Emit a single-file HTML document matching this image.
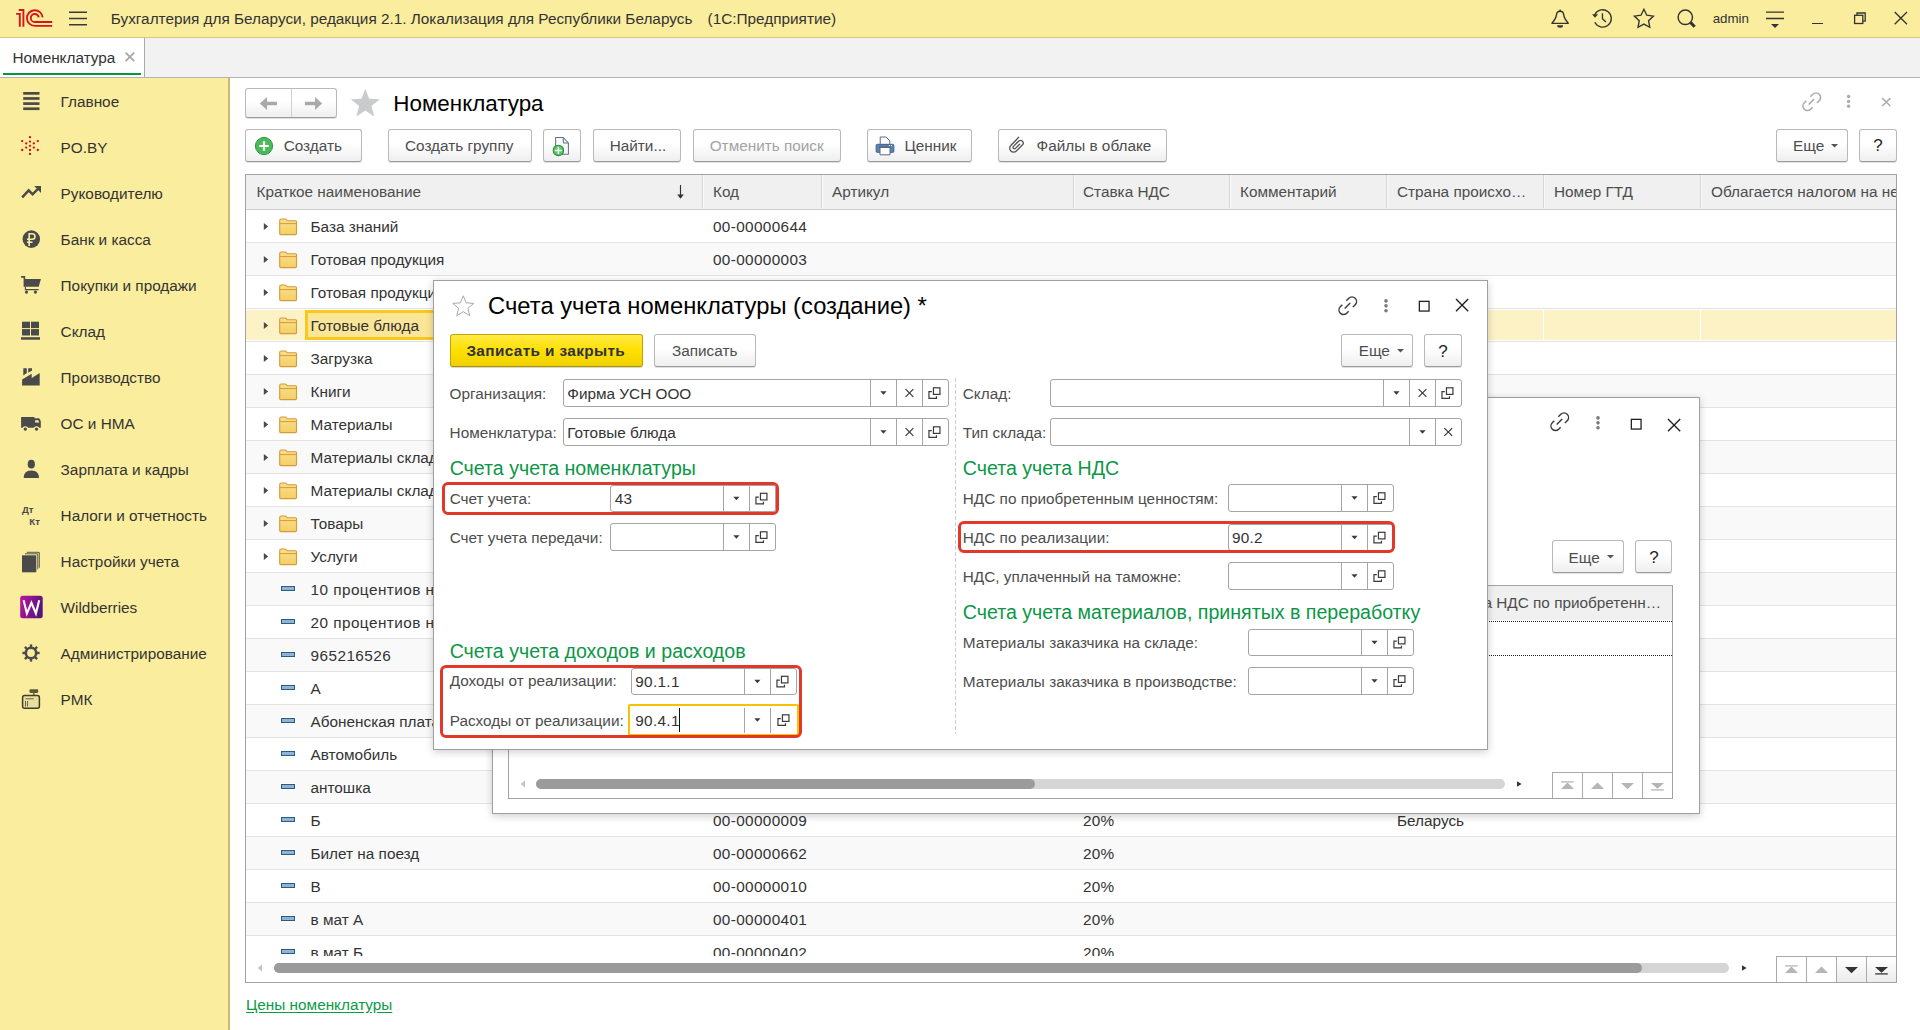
<!DOCTYPE html><html><head><meta charset="utf-8"><style>html,body{margin:0;padding:0;width:1920px;height:1030px;overflow:hidden;background:#fff}body{position:relative;font-family:"Liberation Sans", sans-serif}.t{position:absolute;white-space:nowrap;font-family:"Liberation Sans",sans-serif}svg{display:block}</style></head><body><div style="position:absolute;left:0px;top:0px;width:1920px;height:37px;background:#fbed9e"></div>
<div style="position:absolute;left:0px;top:37px;width:1920px;height:1px;background:#d8c77f"></div>
<svg style="position:absolute;left:0px;top:0px;" width="60" height="37" viewBox="0 0 60 37"><g fill="none" stroke="#d9141a" stroke-width="1.9"><path d="M16.1,13.9 H19.8 V26.8 M18.75,10 H23.4 V26.8"/><path d="M42.6,17.4 A7.85,7.85 0 1 0 34.8,25.9 H52.2"/><path d="M38.75,17.4 A4,4 0 1 0 34.8,22 H52.2"/></g></svg>
<svg style="position:absolute;left:60px;top:0px;" width="40" height="37" viewBox="0 0 40 37"><g stroke="#3a3a3a" stroke-width="1.6"><path d="M9,12.3 H27 M9,18.5 H27 M9,24.7 H27"/></g></svg>
<div class="t" style="left:110.80px;top:11.02px;font-size:15.33px;line-height:15.33px;color:#333;font-weight:normal;">Бухгалтерия для Беларуси, редакция 2.1. Локализация для Республики Беларусь</div>
<div class="t" style="left:707.60px;top:11.02px;font-size:15.33px;line-height:15.33px;color:#333;font-weight:normal;">(1С:Предприятие)</div>
<svg style="position:absolute;left:1540px;top:0px;" width="40" height="37" viewBox="0 0 40 37"><g fill="none" stroke="#333" stroke-width="1.35" stroke-linejoin="round"><path d="M20.1,11.2 C17.6,11.2 16.7,12.6 16.5,14.6 C16.3,17.6 15.4,19.2 11.9,23.3 L28.3,23.3 C24.8,19.2 23.9,17.6 23.7,14.6 C23.5,12.6 22.6,11.2 20.1,11.2 Z"/></g><circle cx="20.1" cy="10.4" r="0.9" fill="#333"/><path d="M17.1,25.3 A3,2.5 0 0 0 23.1,25.3 Z" fill="#333"/></svg>
<svg style="position:absolute;left:1580px;top:0px;" width="40" height="37" viewBox="0 0 40 37"><g fill="none" stroke="#333" stroke-width="1.35"><path d="M14.85,14.50 A8.7,8.7 0 1 1 14.78,22.26"/><path d="M22.45,13.2 V18.8 L25.9,22"/></g><path d="M12,14.3 L18.1,14.3 L15,17.7 Z" fill="#333"/></svg>
<svg style="position:absolute;left:1620px;top:0px;" width="40" height="37" viewBox="0 0 40 37"><path d="M23.90,9.20 L26.78,15.24 L33.41,16.11 L28.56,20.71 L29.78,27.29 L23.90,24.10 L18.02,27.29 L19.24,20.71 L14.39,16.11 L21.02,15.24 Z" fill="none" stroke="#333" stroke-width="1.35" stroke-linejoin="miter"/></svg>
<svg style="position:absolute;left:1660px;top:0px;" width="40" height="37" viewBox="0 0 40 37"><circle cx="25.3" cy="17.3" r="7.2" fill="none" stroke="#333" stroke-width="1.45"/><path d="M30.4,22.4 L34.7,26.7" stroke="#333" stroke-width="3" stroke-linecap="butt"/></svg>
<div class="t" style="left:1712.70px;top:11.52px;font-size:13.33px;line-height:13.33px;color:#333;font-weight:normal;">admin</div>
<svg style="position:absolute;left:1760px;top:0px;" width="30" height="37" viewBox="0 0 30 37"><g stroke="#333" stroke-width="1.3"><path d="M6,12.2 H24 M6,18.5 H24"/></g><path d="M11,24 L19,24 L15,28 Z" fill="#333"/></svg>
<div style="position:absolute;left:1812px;top:22.5px;width:11px;height:1.5px;background:#333"></div>
<svg style="position:absolute;left:1850px;top:0px;" width="24" height="37" viewBox="0 0 24 37"><g fill="none" stroke="#333" stroke-width="1.3"><rect x="4.6" y="15.3" width="8.2" height="8.2"/><path d="M7,15.3 V13 H15.2 V21.2 H12.8"/></g></svg>
<svg style="position:absolute;left:1890px;top:0px;" width="24" height="37" viewBox="0 0 24 37"><g stroke="#333" stroke-width="1.35"><path d="M4.7,12 L17,24.2 M17,12 L4.7,24.2"/></g></svg>
<div style="position:absolute;left:0px;top:38px;width:1920px;height:39px;background:#f2f2f2"></div>
<div style="position:absolute;left:0px;top:77px;width:1920px;height:1px;background:#b3b3b3"></div>
<div style="position:absolute;left:0px;top:38px;width:144px;height:39px;background:#fff"></div>
<div style="position:absolute;left:144px;top:38px;width:1px;height:39px;background:#a9a9a9"></div>
<div style="position:absolute;left:3px;top:73px;width:138px;height:2px;background:#08953f"></div>
<div class="t" style="left:12.50px;top:49.82px;font-size:15.33px;line-height:15.33px;color:#333;font-weight:normal;">Номенклатура</div>
<svg style="position:absolute;left:120px;top:45px;" width="20" height="25" viewBox="0 0 20 25"><g stroke="#a6a6a6" stroke-width="1.7"><path d="M5.6,7.6 L14.2,16.2 M14.2,7.6 L5.6,16.2"/></g></svg>
<div style="position:absolute;left:0px;top:78px;width:229px;height:952px;background:#fbed9e"></div>
<div style="position:absolute;left:228px;top:78px;width:2px;height:952px;background:#c8b976"></div>
<div class="t" style="left:60.60px;top:94.02px;font-size:15.33px;line-height:15.33px;color:#333;font-weight:normal;">Главное</div>
<div class="t" style="left:60.60px;top:140.02px;font-size:15.33px;line-height:15.33px;color:#333;font-weight:normal;">PO.BY</div>
<div class="t" style="left:60.60px;top:186.02px;font-size:15.33px;line-height:15.33px;color:#333;font-weight:normal;">Руководителю</div>
<div class="t" style="left:60.60px;top:232.02px;font-size:15.33px;line-height:15.33px;color:#333;font-weight:normal;">Банк и касса</div>
<div class="t" style="left:60.60px;top:278.02px;font-size:15.33px;line-height:15.33px;color:#333;font-weight:normal;">Покупки и продажи</div>
<div class="t" style="left:60.60px;top:324.02px;font-size:15.33px;line-height:15.33px;color:#333;font-weight:normal;">Склад</div>
<div class="t" style="left:60.60px;top:370.02px;font-size:15.33px;line-height:15.33px;color:#333;font-weight:normal;">Производство</div>
<div class="t" style="left:60.60px;top:416.02px;font-size:15.33px;line-height:15.33px;color:#333;font-weight:normal;">ОС и НМА</div>
<div class="t" style="left:60.60px;top:462.02px;font-size:15.33px;line-height:15.33px;color:#333;font-weight:normal;">Зарплата и кадры</div>
<div class="t" style="left:60.60px;top:508.02px;font-size:15.33px;line-height:15.33px;color:#333;font-weight:normal;">Налоги и отчетность</div>
<div class="t" style="left:60.60px;top:554.02px;font-size:15.33px;line-height:15.33px;color:#333;font-weight:normal;">Настройки учета</div>
<div class="t" style="left:60.60px;top:600.02px;font-size:15.33px;line-height:15.33px;color:#333;font-weight:normal;">Wildberries</div>
<div class="t" style="left:60.60px;top:646.02px;font-size:15.33px;line-height:15.33px;color:#333;font-weight:normal;">Администрирование</div>
<div class="t" style="left:60.60px;top:692.02px;font-size:15.33px;line-height:15.33px;color:#333;font-weight:normal;">РМК</div>
<svg style="position:absolute;left:20px;top:88px;" width="24" height="26" viewBox="0 0 24 26"><rect x="3.2" y="4.00" width="16.3" height="2.7" fill="#4a4a4a"/><rect x="3.2" y="9.13" width="16.3" height="2.7" fill="#4a4a4a"/><rect x="3.2" y="14.26" width="16.3" height="2.7" fill="#4a4a4a"/><rect x="3.2" y="19.39" width="16.3" height="2.7" fill="#4a4a4a"/></svg>
<svg style="position:absolute;left:0px;top:120px;" width="60" height="50" viewBox="0 0 60 50"><circle cx="30" cy="17.20" r="1.15" fill="#d60d0d"/><circle cx="30" cy="21.60" r="1.15" fill="#d60d0d"/><circle cx="30" cy="25.80" r="1.15" fill="#d60d0d"/><circle cx="30" cy="30.00" r="1.15" fill="#d60d0d"/><circle cx="30" cy="33.90" r="1.15" fill="#d60d0d"/><circle cx="26.2" cy="23.40" r="1.15" fill="#d60d0d"/><circle cx="33.8" cy="23.40" r="1.15" fill="#d60d0d"/><circle cx="26.2" cy="27.60" r="1.15" fill="#d60d0d"/><circle cx="33.8" cy="27.60" r="1.15" fill="#d60d0d"/><circle cx="22.2" cy="21.10" r="1.15" fill="#d60d0d"/><circle cx="37.8" cy="21.10" r="1.15" fill="#d60d0d"/><circle cx="22.2" cy="30.00" r="1.15" fill="#d60d0d"/><circle cx="37.8" cy="30.00" r="1.15" fill="#d60d0d"/></svg>
<svg style="position:absolute;left:0px;top:170px;" width="60" height="40" viewBox="0 0 60 40"><path d="M22.2,27.4 L28.7,20.3 L32.6,24.3 L38.2,18.6" fill="none" stroke="#4a4a4a" stroke-width="2.5" stroke-linejoin="miter"/><path d="M34.2,16.1 L41,16.1 L41,23 Z" fill="#4a4a4a"/></svg>
<svg style="position:absolute;left:0px;top:220px;" width="60" height="40" viewBox="0 0 60 40"><circle cx="31.3" cy="19.1" r="8.8" fill="#4a4a4a"/><g fill="none" stroke="#fbed9e" stroke-width="1.6"><path d="M29.2,26 V13.7 H32.2 A2.8,2.8 0 0 1 32.2,19.3 H27"/><path d="M27,22.2 H32.5"/></g></svg>
<svg style="position:absolute;left:0px;top:265px;" width="60" height="40" viewBox="0 0 60 40"><path d="M21.1,11.9 H24.4 V21.7" fill="none" stroke="#4a4a4a" stroke-width="1.6"/><path d="M24.4,14.1 H40.9 L38.7,21.8 H24.4 Z" fill="#4a4a4a"/><path d="M25.4,21.7 V24.6 H38.7" fill="none" stroke="#4a4a4a" stroke-width="1.1"/><circle cx="26.5" cy="27.1" r="1.6" fill="#4a4a4a"/><circle cx="35.4" cy="27.1" r="1.6" fill="#4a4a4a"/></svg>
<svg style="position:absolute;left:0px;top:315px;" width="60" height="30" viewBox="0 0 60 30"><g fill="#4a4a4a"><rect x="22" y="6.7" width="8" height="6.4"/><rect x="31" y="6.7" width="8" height="6.4"/><rect x="22" y="14.1" width="8" height="6.4"/><rect x="31" y="14.1" width="8" height="6.4"/><rect x="21" y="22.2" width="19" height="2.5"/></g></svg>
<svg style="position:absolute;left:0px;top:360px;" width="60" height="30" viewBox="0 0 60 30"><path d="M22.1,19.4 L31.7,13.7 V18.1 L39.7,13.1 V25.6 H22.1 Z M23.3,8.2 H26.8 V13.1 L23.3,15.4 Z M28.2,8.2 H32 V10.5 L28.2,12.8 Z" fill="#4a4a4a"/></svg>
<svg style="position:absolute;left:0px;top:410px;" width="60" height="30" viewBox="0 0 60 30"><path d="M21.1,7.0 H34.4 V8.3 H38.3 Q39.5,8.3 40.1,9.6 L40.8,11.4 V17.8 H21.1 Z" fill="#4a4a4a"/><path d="M35.1,10.2 H38.4 L39.3,12.6 H35.1 Z" fill="#fbed9e"/><circle cx="25.3" cy="19.1" r="2.9" fill="#fbed9e"/><circle cx="36.5" cy="19.1" r="2.9" fill="#fbed9e"/><circle cx="25.3" cy="19.1" r="1.7" fill="#4a4a4a"/><circle cx="36.5" cy="19.1" r="1.7" fill="#4a4a4a"/></svg>
<svg style="position:absolute;left:0px;top:455px;" width="60" height="30" viewBox="0 0 60 30"><ellipse cx="31.3" cy="9.2" rx="3.6" ry="4.4" fill="#4a4a4a"/><path d="M23.7,23 C23.7,18.5 26,15.5 31.3,15.5 C36.6,15.5 39,18.5 39,23 Z" fill="#4a4a4a"/></svg>
<div class="t" style="left:22px;top:505.2px;font-size:9.6px;line-height:9.6px;font-weight:bold;color:#4a4a4a">Дт</div>
<div class="t" style="left:29.3px;top:516.8px;font-size:9.6px;line-height:9.6px;font-weight:bold;color:#4a4a4a">Кт</div>
<svg style="position:absolute;left:0px;top:546.5px;" width="60" height="30" viewBox="0 0 60 30"><g fill="none" stroke="#4a4a4a" stroke-width="0.9"><path d="M25,6.8 H37.8 V22.3"/><path d="M26.8,5.3 H39.3 V20.8"/></g><rect x="22" y="8.3" width="14.3" height="17" fill="#4a4a4a"/></svg>
<svg style="position:absolute;left:0px;top:590px;" width="60" height="35" viewBox="0 0 60 35"><defs><linearGradient id="wb" x1="0" y1="0" x2="1" y2="0.3"><stop offset="0" stop-color="#c0139f"/><stop offset="1" stop-color="#55157f"/></linearGradient></defs><rect x="20.2" y="5.8" width="22.5" height="22.5" rx="2.5" fill="url(#wb)"/><path d="M23.6,10.2 L26.9,23.5 L31.4,12.8 L35.9,23.5 L39.2,10.2" fill="none" stroke="#fff" stroke-width="2.1" stroke-linejoin="miter"/></svg>
<svg style="position:absolute;left:0px;top:640px;" width="60" height="30" viewBox="0 0 60 30"><circle cx="31" cy="13" r="5.2" fill="none" stroke="#4a4a4a" stroke-width="2.6"/><path d="M36.60,13.00 L39.60,13.00" stroke="#4a4a4a" stroke-width="2.4"/><path d="M34.96,16.96 L37.08,19.08" stroke="#4a4a4a" stroke-width="2.4"/><path d="M31.00,18.60 L31.00,21.60" stroke="#4a4a4a" stroke-width="2.4"/><path d="M27.04,16.96 L24.92,19.08" stroke="#4a4a4a" stroke-width="2.4"/><path d="M25.40,13.00 L22.40,13.00" stroke="#4a4a4a" stroke-width="2.4"/><path d="M27.04,9.04 L24.92,6.92" stroke="#4a4a4a" stroke-width="2.4"/><path d="M31.00,7.40 L31.00,4.40" stroke="#4a4a4a" stroke-width="2.4"/><path d="M34.96,9.04 L37.08,6.92" stroke="#4a4a4a" stroke-width="2.4"/></svg>
<svg style="position:absolute;left:0px;top:685px;" width="60" height="30" viewBox="0 0 60 30"><rect x="29.5" y="4.3" width="8.7" height="3.6" rx="0.8" fill="#5a5a3a"/><path d="M33.8,8 V10.4" stroke="#5a5a3a" stroke-width="1.3"/><rect x="22.6" y="10.6" width="16.8" height="12.6" rx="2" fill="#e9dea0" stroke="#3f3f2a" stroke-width="1.5"/><path d="M25.5,13.8 H33.8 M25.5,16 V21.5 M27.5,16 V21.5" stroke="#5a5a3a" stroke-width="0.9"/></svg>
<div style="position:absolute;left:230px;top:78px;width:1690px;height:952px;background:#fff"></div>
<div style="position:absolute;left:245px;top:88px;width:92px;height:30px;box-sizing:border-box;border:1px solid #b9b9b9;border-bottom-color:#9c9c9c;border-radius:3px;background:linear-gradient(#ffffff 0%,#ffffff 42%,#efefef 100%);box-shadow:0 1px 0 rgba(0,0,0,0.12);"></div>
<div style="position:absolute;left:291px;top:89px;width:1px;height:28px;background:#d0d0d0"></div>
<svg style="position:absolute;left:255px;top:92px;" width="30" height="22" viewBox="0 0 30 22"><path d="M4.8,11.5 L12.1,5 V9.8 H22 V13.2 H12.1 V18 Z" fill="#a9a9a9"/></svg>
<svg style="position:absolute;left:300px;top:92px;" width="30" height="22" viewBox="0 0 30 22"><path d="M22.1,11.5 L15,5 V9.8 H4.9 V13.2 H15 V18 Z" fill="#a9a9a9"/></svg>
<svg style="position:absolute;left:345px;top:84px;" width="40" height="40" viewBox="0 0 40 40"><path d="M20.30,4.80 L24.12,14.84 L34.85,15.37 L26.48,22.11 L29.29,32.48 L20.30,26.60 L11.31,32.48 L14.12,22.11 L5.75,15.37 L16.48,14.84 Z" fill="#cacbcd"/></svg>
<div class="t" style="left:393.30px;top:92.84px;font-size:22.4px;line-height:22.4px;color:#000;font-weight:normal;">Номенклатура</div>
<svg style="position:absolute;left:1802px;top:92px;" width="20" height="20" viewBox="0 0 20 20"><path d="M4.3,8.8 L2.3,10.8 A4.5,4.5 0 0 0 8.7,17.2 L10.6,15.3 M8.3,4.8 L10.8,2.3 A4.5,4.5 0 0 1 17.2,8.7 L14.9,11 M6.7,12.5 L12.2,7" fill="none" stroke="#ababab" stroke-width="1.6"/></svg>
<svg style="position:absolute;left:1840px;top:90px;" width="20" height="22" viewBox="0 0 20 22"><g fill="#ababab"><circle cx="8.6" cy="6.5" r="1.7"/><circle cx="8.6" cy="11.4" r="1.7"/><circle cx="8.6" cy="16.3" r="1.7"/></g></svg>
<svg style="position:absolute;left:1876px;top:92px;" width="20" height="20" viewBox="0 0 20 20"><path d="M6.2,6.1 L14.4,14 M14.4,6.1 L6.2,14" stroke="#adadad" stroke-width="1.5"/></svg>
<div style="position:absolute;left:245px;top:129px;width:116.5px;height:32.5px;box-sizing:border-box;border:1px solid #b9b9b9;border-bottom-color:#9c9c9c;border-radius:3px;background:linear-gradient(#ffffff 0%,#ffffff 42%,#efefef 100%);box-shadow:0 1px 0 rgba(0,0,0,0.12);"></div>
<div class="t" style="left:283.70px;top:138.02px;font-size:15.33px;line-height:15.33px;color:#4d4d4d;font-weight:normal;">Создать</div>
<svg style="position:absolute;left:253px;top:135px;" width="22" height="22" viewBox="0 0 22 22"><circle cx="11" cy="11" r="8.6" fill="#4cb85c" stroke="#2a9a3a" stroke-width="1"/><path d="M11,6.3 V15.7 M6.3,11 H15.7" stroke="#fff" stroke-width="2.2"/></svg>
<div style="position:absolute;left:387.5px;top:129px;width:144.0px;height:32.5px;box-sizing:border-box;border:1px solid #b9b9b9;border-bottom-color:#9c9c9c;border-radius:3px;background:linear-gradient(#ffffff 0%,#ffffff 42%,#efefef 100%);box-shadow:0 1px 0 rgba(0,0,0,0.12);"></div>
<div class="t" style="left:405.00px;top:138.02px;font-size:15.33px;line-height:15.33px;color:#4d4d4d;font-weight:normal;">Создать группу</div>
<div style="position:absolute;left:543.3px;top:129px;width:37.5px;height:32.5px;box-sizing:border-box;border:1px solid #b9b9b9;border-bottom-color:#9c9c9c;border-radius:3px;background:linear-gradient(#ffffff 0%,#ffffff 42%,#efefef 100%);box-shadow:0 1px 0 rgba(0,0,0,0.12);"></div>
<svg style="position:absolute;left:550px;top:133px;" width="26" height="26" viewBox="0 0 26 26"><path d="M5.6,4.5 H13.3 L18.4,10 V21.2 H5.6 Z" fill="#fafafa" stroke="#5f7186" stroke-width="1.05" stroke-linejoin="round"/><path d="M13.3,4.5 V9 Q13.3,10 14.3,10 H18.4" fill="none" stroke="#5f7186" stroke-width="1.05"/><circle cx="8.4" cy="17.4" r="5.2" fill="#5cc46c" stroke="#1f9a2f" stroke-width="1.1"/><path d="M8.4,13.9 V20.9 M4.9,17.4 H11.9" stroke="#fff" stroke-width="1.5"/></svg>
<div style="position:absolute;left:592.5px;top:129px;width:88.0px;height:32.5px;box-sizing:border-box;border:1px solid #b9b9b9;border-bottom-color:#9c9c9c;border-radius:3px;background:linear-gradient(#ffffff 0%,#ffffff 42%,#efefef 100%);box-shadow:0 1px 0 rgba(0,0,0,0.12);"></div>
<div class="t" style="left:609.70px;top:138.02px;font-size:15.33px;line-height:15.33px;color:#4d4d4d;font-weight:normal;">Найти...</div>
<div style="position:absolute;left:692.5px;top:129px;width:148.0px;height:32.5px;box-sizing:border-box;border:1px solid #b9b9b9;border-bottom-color:#9c9c9c;border-radius:3px;background:linear-gradient(#ffffff 0%,#ffffff 42%,#efefef 100%);box-shadow:0 1px 0 rgba(0,0,0,0.12);"></div>
<div class="t" style="left:709.70px;top:138.02px;font-size:15.33px;line-height:15.33px;color:#a3a3a3;font-weight:normal;">Отменить поиск</div>
<div style="position:absolute;left:866.7px;top:129px;width:105.79999999999995px;height:32.5px;box-sizing:border-box;border:1px solid #b9b9b9;border-bottom-color:#9c9c9c;border-radius:3px;background:linear-gradient(#ffffff 0%,#ffffff 42%,#efefef 100%);box-shadow:0 1px 0 rgba(0,0,0,0.12);"></div>
<div class="t" style="left:904.50px;top:138.02px;font-size:15.33px;line-height:15.33px;color:#4d4d4d;font-weight:normal;">Ценник</div>
<svg style="position:absolute;left:872px;top:133px;" width="26" height="26" viewBox="0 0 26 26"><path d="M8.2,4 H14.3 L17.8,8 V11.8 H8.2 Z" fill="#fff" stroke="#5b6b80" stroke-width="1"/><rect x="4.1" y="11.3" width="17.8" height="8.1" rx="1.2" fill="#5b82ad" stroke="#3f6088" stroke-width="0.9"/><path d="M7,14.2 H19" stroke="#3a5677" stroke-width="1"/><path d="M8,14.5 H18 V21.8 H8 Z" fill="#fff" stroke="#5b6b80" stroke-width="1"/><circle cx="17.4" cy="12.6" r="0.6" fill="#fff"/><circle cx="19.5" cy="12.6" r="0.6" fill="#fff"/></svg>
<div style="position:absolute;left:998.4px;top:129px;width:169.0000000000001px;height:32.5px;box-sizing:border-box;border:1px solid #b9b9b9;border-bottom-color:#9c9c9c;border-radius:3px;background:linear-gradient(#ffffff 0%,#ffffff 42%,#efefef 100%);box-shadow:0 1px 0 rgba(0,0,0,0.12);"></div>
<div class="t" style="left:1036.50px;top:138.02px;font-size:15.33px;line-height:15.33px;color:#4d4d4d;font-weight:normal;">Файлы в облаке</div>
<svg style="position:absolute;left:1004px;top:133px;" width="26" height="24" viewBox="0 0 26 24"><path d="M14.7,4.3 L6.84,12.54 A3.9,3.9 0 0 0 12.36,18.06 L18.41,12.01 A2.7,2.7 0 0 0 14.59,8.19 L9.4,13.4 A1.41,1.41 0 0 0 11.4,15.4 L15.6,11.2" fill="none" stroke="#555" stroke-width="1.3" stroke-linecap="round"/></svg>
<div style="position:absolute;left:1776.4px;top:129px;width:71.19999999999982px;height:32.5px;box-sizing:border-box;border:1px solid #b9b9b9;border-bottom-color:#9c9c9c;border-radius:3px;background:linear-gradient(#ffffff 0%,#ffffff 42%,#efefef 100%);box-shadow:0 1px 0 rgba(0,0,0,0.12);"></div>
<div class="t" style="left:1793.00px;top:138.02px;font-size:15.33px;line-height:15.33px;color:#4d4d4d;font-weight:normal;">Еще</div>
<svg style="position:absolute;left:1829px;top:141px;" width="12" height="10" viewBox="0 0 12 10"><path d="M2,3 H9 L5.5,6.6 Z" fill="#555"/></svg>
<div style="position:absolute;left:1859.4px;top:129px;width:37.399999999999864px;height:32.5px;box-sizing:border-box;border:1px solid #b9b9b9;border-bottom-color:#9c9c9c;border-radius:3px;background:linear-gradient(#ffffff 0%,#ffffff 42%,#efefef 100%);box-shadow:0 1px 0 rgba(0,0,0,0.12);"></div>
<div class="t" style="left:1873.20px;top:137.11px;font-size:17px;line-height:17px;color:#222;font-weight:normal;">?</div>
<div style="position:absolute;left:245px;top:174px;width:1652px;height:809px;box-sizing:border-box;border:1px solid #a3a3a3;background:#fff"></div>
<div style="position:absolute;left:246px;top:175px;width:1650px;height:34px;background:#f0f0f0"></div>
<div style="position:absolute;left:246px;top:209px;width:1650px;height:1px;background:#cdcdcd"></div>
<div style="position:absolute;left:702px;top:175px;width:1px;height:33px;background:#d6d6d6"></div>
<div style="position:absolute;left:703px;top:175px;width:1px;height:33px;background:#fafafa"></div>
<div style="position:absolute;left:821px;top:175px;width:1px;height:33px;background:#d6d6d6"></div>
<div style="position:absolute;left:822px;top:175px;width:1px;height:33px;background:#fafafa"></div>
<div style="position:absolute;left:1073px;top:175px;width:1px;height:33px;background:#d6d6d6"></div>
<div style="position:absolute;left:1074px;top:175px;width:1px;height:33px;background:#fafafa"></div>
<div style="position:absolute;left:1229px;top:175px;width:1px;height:33px;background:#d6d6d6"></div>
<div style="position:absolute;left:1230px;top:175px;width:1px;height:33px;background:#fafafa"></div>
<div style="position:absolute;left:1386px;top:175px;width:1px;height:33px;background:#d6d6d6"></div>
<div style="position:absolute;left:1387px;top:175px;width:1px;height:33px;background:#fafafa"></div>
<div style="position:absolute;left:1543px;top:175px;width:1px;height:33px;background:#d6d6d6"></div>
<div style="position:absolute;left:1544px;top:175px;width:1px;height:33px;background:#fafafa"></div>
<div style="position:absolute;left:1700px;top:175px;width:1px;height:33px;background:#d6d6d6"></div>
<div style="position:absolute;left:1701px;top:175px;width:1px;height:33px;background:#fafafa"></div>
<div style="position:absolute;left:246px;top:175px;width:1650px;height:33px;overflow:hidden">
<div class="t" style="left:10.50px;top:9.02px;font-size:15.33px;line-height:15.33px;color:#4d4d4d;font-weight:normal;">Краткое наименование</div>
<div class="t" style="left:467.00px;top:9.02px;font-size:15.33px;line-height:15.33px;color:#4d4d4d;font-weight:normal;">Код</div>
<div class="t" style="left:586.00px;top:9.02px;font-size:15.33px;line-height:15.33px;color:#4d4d4d;font-weight:normal;">Артикул</div>
<div class="t" style="left:837.00px;top:9.02px;font-size:15.33px;line-height:15.33px;color:#4d4d4d;font-weight:normal;">Ставка НДС</div>
<div class="t" style="left:994.00px;top:9.02px;font-size:15.33px;line-height:15.33px;color:#4d4d4d;font-weight:normal;">Комментарий</div>
<div class="t" style="left:1151.00px;top:9.02px;font-size:15.33px;line-height:15.33px;color:#4d4d4d;font-weight:normal;">Страна происхо…</div>
<div class="t" style="left:1308.00px;top:9.02px;font-size:15.33px;line-height:15.33px;color:#4d4d4d;font-weight:normal;">Номер ГТД</div>
<div class="t" style="left:1465.00px;top:9.02px;font-size:15.33px;line-height:15.33px;color:#4d4d4d;font-weight:normal;">Облагается налогом на недвижимость</div>
</div>
<svg style="position:absolute;left:672px;top:180px;" width="16" height="24" viewBox="0 0 16 24"><path d="M8.5,5 V16" stroke="#333" stroke-width="1.15"/><path d="M5.2,14.6 L8.5,18.8 L11.8,14.6 Z" fill="#333"/></svg>
<div style="position:absolute;left:246px;top:210px;width:1650px;height:746px;overflow:hidden">
<div style="position:absolute;left:0px;top:32px;width:1650px;height:1px;background:#e3e3e3"></div>
<svg style="position:absolute;left:12px;top:4px" width="44" height="24" viewBox="0 0 44 24"><path d="M5.8,8.9 V16 L10.2,12.45 Z" fill="#4a4a4a"/><defs><linearGradient id="fg" x1="0" y1="0" x2="0" y2="1"><stop offset="0" stop-color="#fbe08a"/><stop offset="1" stop-color="#f3cf68"/></linearGradient></defs><path d="M21.7,6.8 Q21.7,5 23.2,5 H27.5 L29.4,6.8 H37.6 Q38.5,6.8 38.5,7.8 V19.6 Q38.5,20.6 37.5,20.6 H22.7 Q21.7,20.6 21.7,19.6 Z" fill="url(#fg)" stroke="#d59a3b" stroke-width="1.1"/><path d="M21.9,9.6 H38.3" stroke="#d59a3b" stroke-width="1"/></svg>
<div class="t" style="left:64.5px;top:9.02px;font-size:15.33px;line-height:15.33px;color:#333;letter-spacing:0">База знаний</div>
<div class="t" style="left:467px;top:9.02px;font-size:15.33px;line-height:15.33px;color:#333;letter-spacing:0.35px">00-00000644</div>
<div style="position:absolute;left:0px;top:33px;width:1650px;height:32px;background:#f9f9f9"></div>
<div style="position:absolute;left:0px;top:65px;width:1650px;height:1px;background:#e3e3e3"></div>
<svg style="position:absolute;left:12px;top:37px" width="44" height="24" viewBox="0 0 44 24"><path d="M5.8,8.9 V16 L10.2,12.45 Z" fill="#4a4a4a"/><defs><linearGradient id="fg" x1="0" y1="0" x2="0" y2="1"><stop offset="0" stop-color="#fbe08a"/><stop offset="1" stop-color="#f3cf68"/></linearGradient></defs><path d="M21.7,6.8 Q21.7,5 23.2,5 H27.5 L29.4,6.8 H37.6 Q38.5,6.8 38.5,7.8 V19.6 Q38.5,20.6 37.5,20.6 H22.7 Q21.7,20.6 21.7,19.6 Z" fill="url(#fg)" stroke="#d59a3b" stroke-width="1.1"/><path d="M21.9,9.6 H38.3" stroke="#d59a3b" stroke-width="1"/></svg>
<div class="t" style="left:64.5px;top:42.02px;font-size:15.33px;line-height:15.33px;color:#333;letter-spacing:0">Готовая продукция</div>
<div class="t" style="left:467px;top:42.02px;font-size:15.33px;line-height:15.33px;color:#333;letter-spacing:0.35px">00-00000003</div>
<div style="position:absolute;left:0px;top:98px;width:1650px;height:1px;background:#e3e3e3"></div>
<svg style="position:absolute;left:12px;top:70px" width="44" height="24" viewBox="0 0 44 24"><path d="M5.8,8.9 V16 L10.2,12.45 Z" fill="#4a4a4a"/><defs><linearGradient id="fg" x1="0" y1="0" x2="0" y2="1"><stop offset="0" stop-color="#fbe08a"/><stop offset="1" stop-color="#f3cf68"/></linearGradient></defs><path d="M21.7,6.8 Q21.7,5 23.2,5 H27.5 L29.4,6.8 H37.6 Q38.5,6.8 38.5,7.8 V19.6 Q38.5,20.6 37.5,20.6 H22.7 Q21.7,20.6 21.7,19.6 Z" fill="url(#fg)" stroke="#d59a3b" stroke-width="1.1"/><path d="M21.9,9.6 H38.3" stroke="#d59a3b" stroke-width="1"/></svg>
<div class="t" style="left:64.5px;top:75.02px;font-size:15.33px;line-height:15.33px;color:#333;letter-spacing:0">Готовая продукция (склад)</div>
<div style="position:absolute;left:0px;top:100px;width:1650px;height:30px;background:#fdf2c6"></div>
<div style="position:absolute;left:456px;top:100px;width:1px;height:30px;background:#fff"></div>
<div style="position:absolute;left:575px;top:100px;width:1px;height:30px;background:#fff"></div>
<div style="position:absolute;left:827px;top:100px;width:1px;height:30px;background:#fff"></div>
<div style="position:absolute;left:983px;top:100px;width:1px;height:30px;background:#fff"></div>
<div style="position:absolute;left:1140px;top:100px;width:1px;height:30px;background:#fff"></div>
<div style="position:absolute;left:1297px;top:100px;width:1px;height:30px;background:#fff"></div>
<div style="position:absolute;left:1454px;top:100px;width:1px;height:30px;background:#fff"></div>
<div style="position:absolute;left:59px;top:100px;width:397px;height:30px;box-sizing:border-box;border:3px solid #f6c91c;background:#fbe597"></div>
<div style="position:absolute;left:0px;top:131px;width:1650px;height:1px;background:#e3e3e3"></div>
<svg style="position:absolute;left:12px;top:103px" width="44" height="24" viewBox="0 0 44 24"><path d="M5.8,8.9 V16 L10.2,12.45 Z" fill="#4a4a4a"/><defs><linearGradient id="fg" x1="0" y1="0" x2="0" y2="1"><stop offset="0" stop-color="#fbe08a"/><stop offset="1" stop-color="#f3cf68"/></linearGradient></defs><path d="M21.7,6.8 Q21.7,5 23.2,5 H27.5 L29.4,6.8 H37.6 Q38.5,6.8 38.5,7.8 V19.6 Q38.5,20.6 37.5,20.6 H22.7 Q21.7,20.6 21.7,19.6 Z" fill="url(#fg)" stroke="#d59a3b" stroke-width="1.1"/><path d="M21.9,9.6 H38.3" stroke="#d59a3b" stroke-width="1"/></svg>
<div class="t" style="left:64.5px;top:108.02px;font-size:15.33px;line-height:15.33px;color:#333;letter-spacing:0">Готовые блюда</div>
<div style="position:absolute;left:0px;top:164px;width:1650px;height:1px;background:#e3e3e3"></div>
<svg style="position:absolute;left:12px;top:136px" width="44" height="24" viewBox="0 0 44 24"><path d="M5.8,8.9 V16 L10.2,12.45 Z" fill="#4a4a4a"/><defs><linearGradient id="fg" x1="0" y1="0" x2="0" y2="1"><stop offset="0" stop-color="#fbe08a"/><stop offset="1" stop-color="#f3cf68"/></linearGradient></defs><path d="M21.7,6.8 Q21.7,5 23.2,5 H27.5 L29.4,6.8 H37.6 Q38.5,6.8 38.5,7.8 V19.6 Q38.5,20.6 37.5,20.6 H22.7 Q21.7,20.6 21.7,19.6 Z" fill="url(#fg)" stroke="#d59a3b" stroke-width="1.1"/><path d="M21.9,9.6 H38.3" stroke="#d59a3b" stroke-width="1"/></svg>
<div class="t" style="left:64.5px;top:141.02px;font-size:15.33px;line-height:15.33px;color:#333;letter-spacing:0">Загрузка</div>
<div style="position:absolute;left:0px;top:165px;width:1650px;height:32px;background:#f9f9f9"></div>
<div style="position:absolute;left:0px;top:197px;width:1650px;height:1px;background:#e3e3e3"></div>
<svg style="position:absolute;left:12px;top:169px" width="44" height="24" viewBox="0 0 44 24"><path d="M5.8,8.9 V16 L10.2,12.45 Z" fill="#4a4a4a"/><defs><linearGradient id="fg" x1="0" y1="0" x2="0" y2="1"><stop offset="0" stop-color="#fbe08a"/><stop offset="1" stop-color="#f3cf68"/></linearGradient></defs><path d="M21.7,6.8 Q21.7,5 23.2,5 H27.5 L29.4,6.8 H37.6 Q38.5,6.8 38.5,7.8 V19.6 Q38.5,20.6 37.5,20.6 H22.7 Q21.7,20.6 21.7,19.6 Z" fill="url(#fg)" stroke="#d59a3b" stroke-width="1.1"/><path d="M21.9,9.6 H38.3" stroke="#d59a3b" stroke-width="1"/></svg>
<div class="t" style="left:64.5px;top:174.02px;font-size:15.33px;line-height:15.33px;color:#333;letter-spacing:0">Книги</div>
<div style="position:absolute;left:0px;top:230px;width:1650px;height:1px;background:#e3e3e3"></div>
<svg style="position:absolute;left:12px;top:202px" width="44" height="24" viewBox="0 0 44 24"><path d="M5.8,8.9 V16 L10.2,12.45 Z" fill="#4a4a4a"/><defs><linearGradient id="fg" x1="0" y1="0" x2="0" y2="1"><stop offset="0" stop-color="#fbe08a"/><stop offset="1" stop-color="#f3cf68"/></linearGradient></defs><path d="M21.7,6.8 Q21.7,5 23.2,5 H27.5 L29.4,6.8 H37.6 Q38.5,6.8 38.5,7.8 V19.6 Q38.5,20.6 37.5,20.6 H22.7 Q21.7,20.6 21.7,19.6 Z" fill="url(#fg)" stroke="#d59a3b" stroke-width="1.1"/><path d="M21.9,9.6 H38.3" stroke="#d59a3b" stroke-width="1"/></svg>
<div class="t" style="left:64.5px;top:207.02px;font-size:15.33px;line-height:15.33px;color:#333;letter-spacing:0">Материалы</div>
<div style="position:absolute;left:0px;top:231px;width:1650px;height:32px;background:#f9f9f9"></div>
<div style="position:absolute;left:0px;top:263px;width:1650px;height:1px;background:#e3e3e3"></div>
<svg style="position:absolute;left:12px;top:235px" width="44" height="24" viewBox="0 0 44 24"><path d="M5.8,8.9 V16 L10.2,12.45 Z" fill="#4a4a4a"/><defs><linearGradient id="fg" x1="0" y1="0" x2="0" y2="1"><stop offset="0" stop-color="#fbe08a"/><stop offset="1" stop-color="#f3cf68"/></linearGradient></defs><path d="M21.7,6.8 Q21.7,5 23.2,5 H27.5 L29.4,6.8 H37.6 Q38.5,6.8 38.5,7.8 V19.6 Q38.5,20.6 37.5,20.6 H22.7 Q21.7,20.6 21.7,19.6 Z" fill="url(#fg)" stroke="#d59a3b" stroke-width="1.1"/><path d="M21.9,9.6 H38.3" stroke="#d59a3b" stroke-width="1"/></svg>
<div class="t" style="left:64.5px;top:240.02px;font-size:15.33px;line-height:15.33px;color:#333;letter-spacing:0">Материалы склад 1</div>
<div style="position:absolute;left:0px;top:296px;width:1650px;height:1px;background:#e3e3e3"></div>
<svg style="position:absolute;left:12px;top:268px" width="44" height="24" viewBox="0 0 44 24"><path d="M5.8,8.9 V16 L10.2,12.45 Z" fill="#4a4a4a"/><defs><linearGradient id="fg" x1="0" y1="0" x2="0" y2="1"><stop offset="0" stop-color="#fbe08a"/><stop offset="1" stop-color="#f3cf68"/></linearGradient></defs><path d="M21.7,6.8 Q21.7,5 23.2,5 H27.5 L29.4,6.8 H37.6 Q38.5,6.8 38.5,7.8 V19.6 Q38.5,20.6 37.5,20.6 H22.7 Q21.7,20.6 21.7,19.6 Z" fill="url(#fg)" stroke="#d59a3b" stroke-width="1.1"/><path d="M21.9,9.6 H38.3" stroke="#d59a3b" stroke-width="1"/></svg>
<div class="t" style="left:64.5px;top:273.02px;font-size:15.33px;line-height:15.33px;color:#333;letter-spacing:0">Материалы склад 2</div>
<div style="position:absolute;left:0px;top:297px;width:1650px;height:32px;background:#f9f9f9"></div>
<div style="position:absolute;left:0px;top:329px;width:1650px;height:1px;background:#e3e3e3"></div>
<svg style="position:absolute;left:12px;top:301px" width="44" height="24" viewBox="0 0 44 24"><path d="M5.8,8.9 V16 L10.2,12.45 Z" fill="#4a4a4a"/><defs><linearGradient id="fg" x1="0" y1="0" x2="0" y2="1"><stop offset="0" stop-color="#fbe08a"/><stop offset="1" stop-color="#f3cf68"/></linearGradient></defs><path d="M21.7,6.8 Q21.7,5 23.2,5 H27.5 L29.4,6.8 H37.6 Q38.5,6.8 38.5,7.8 V19.6 Q38.5,20.6 37.5,20.6 H22.7 Q21.7,20.6 21.7,19.6 Z" fill="url(#fg)" stroke="#d59a3b" stroke-width="1.1"/><path d="M21.9,9.6 H38.3" stroke="#d59a3b" stroke-width="1"/></svg>
<div class="t" style="left:64.5px;top:306.02px;font-size:15.33px;line-height:15.33px;color:#333;letter-spacing:0">Товары</div>
<div style="position:absolute;left:0px;top:362px;width:1650px;height:1px;background:#e3e3e3"></div>
<svg style="position:absolute;left:12px;top:334px" width="44" height="24" viewBox="0 0 44 24"><path d="M5.8,8.9 V16 L10.2,12.45 Z" fill="#4a4a4a"/><defs><linearGradient id="fg" x1="0" y1="0" x2="0" y2="1"><stop offset="0" stop-color="#fbe08a"/><stop offset="1" stop-color="#f3cf68"/></linearGradient></defs><path d="M21.7,6.8 Q21.7,5 23.2,5 H27.5 L29.4,6.8 H37.6 Q38.5,6.8 38.5,7.8 V19.6 Q38.5,20.6 37.5,20.6 H22.7 Q21.7,20.6 21.7,19.6 Z" fill="url(#fg)" stroke="#d59a3b" stroke-width="1.1"/><path d="M21.9,9.6 H38.3" stroke="#d59a3b" stroke-width="1"/></svg>
<div class="t" style="left:64.5px;top:339.02px;font-size:15.33px;line-height:15.33px;color:#333;letter-spacing:0">Услуги</div>
<div style="position:absolute;left:0px;top:363px;width:1650px;height:32px;background:#f9f9f9"></div>
<div style="position:absolute;left:0px;top:395px;width:1650px;height:1px;background:#e3e3e3"></div>
<div style="position:absolute;left:35px;top:376.2px;width:14px;height:4.6px;box-sizing:border-box;border:1px solid #2e5b82;background:#8fb4da;box-shadow:0 0 0 1px #fff"></div>
<div class="t" style="left:64.5px;top:372.02px;font-size:15.33px;line-height:15.33px;color:#333;letter-spacing:0.45px">10 процентиов ндс</div>
<div style="position:absolute;left:0px;top:428px;width:1650px;height:1px;background:#e3e3e3"></div>
<div style="position:absolute;left:35px;top:409.2px;width:14px;height:4.6px;box-sizing:border-box;border:1px solid #2e5b82;background:#8fb4da;box-shadow:0 0 0 1px #fff"></div>
<div class="t" style="left:64.5px;top:405.02px;font-size:15.33px;line-height:15.33px;color:#333;letter-spacing:0.45px">20 процентиов ндс</div>
<div style="position:absolute;left:0px;top:429px;width:1650px;height:32px;background:#f9f9f9"></div>
<div style="position:absolute;left:0px;top:461px;width:1650px;height:1px;background:#e3e3e3"></div>
<div style="position:absolute;left:35px;top:442.2px;width:14px;height:4.6px;box-sizing:border-box;border:1px solid #2e5b82;background:#8fb4da;box-shadow:0 0 0 1px #fff"></div>
<div class="t" style="left:64.5px;top:438.02px;font-size:15.33px;line-height:15.33px;color:#333;letter-spacing:0.45px">965216526</div>
<div style="position:absolute;left:0px;top:494px;width:1650px;height:1px;background:#e3e3e3"></div>
<div style="position:absolute;left:35px;top:475.2px;width:14px;height:4.6px;box-sizing:border-box;border:1px solid #2e5b82;background:#8fb4da;box-shadow:0 0 0 1px #fff"></div>
<div class="t" style="left:64.5px;top:471.02px;font-size:15.33px;line-height:15.33px;color:#333;letter-spacing:0">А</div>
<div style="position:absolute;left:0px;top:495px;width:1650px;height:32px;background:#f9f9f9"></div>
<div style="position:absolute;left:0px;top:527px;width:1650px;height:1px;background:#e3e3e3"></div>
<div style="position:absolute;left:35px;top:508.2px;width:14px;height:4.6px;box-sizing:border-box;border:1px solid #2e5b82;background:#8fb4da;box-shadow:0 0 0 1px #fff"></div>
<div class="t" style="left:64.5px;top:504.02px;font-size:15.33px;line-height:15.33px;color:#333;letter-spacing:0">Абоненская плата</div>
<div style="position:absolute;left:0px;top:560px;width:1650px;height:1px;background:#e3e3e3"></div>
<div style="position:absolute;left:35px;top:541.2px;width:14px;height:4.6px;box-sizing:border-box;border:1px solid #2e5b82;background:#8fb4da;box-shadow:0 0 0 1px #fff"></div>
<div class="t" style="left:64.5px;top:537.02px;font-size:15.33px;line-height:15.33px;color:#333;letter-spacing:0">Автомобиль</div>
<div style="position:absolute;left:0px;top:561px;width:1650px;height:32px;background:#f9f9f9"></div>
<div style="position:absolute;left:0px;top:593px;width:1650px;height:1px;background:#e3e3e3"></div>
<div style="position:absolute;left:35px;top:574.2px;width:14px;height:4.6px;box-sizing:border-box;border:1px solid #2e5b82;background:#8fb4da;box-shadow:0 0 0 1px #fff"></div>
<div class="t" style="left:64.5px;top:570.02px;font-size:15.33px;line-height:15.33px;color:#333;letter-spacing:0">антошка</div>
<div style="position:absolute;left:0px;top:626px;width:1650px;height:1px;background:#e3e3e3"></div>
<div style="position:absolute;left:35px;top:607.2px;width:14px;height:4.6px;box-sizing:border-box;border:1px solid #2e5b82;background:#8fb4da;box-shadow:0 0 0 1px #fff"></div>
<div class="t" style="left:64.5px;top:603.02px;font-size:15.33px;line-height:15.33px;color:#333;letter-spacing:0">Б</div>
<div class="t" style="left:467px;top:603.02px;font-size:15.33px;line-height:15.33px;color:#333;letter-spacing:0.35px">00-00000009</div>
<div class="t" style="left:837px;top:603.02px;font-size:15.33px;line-height:15.33px;color:#333;letter-spacing:0.2px">20%</div>
<div class="t" style="left:1151px;top:603.02px;font-size:15.33px;line-height:15.33px;color:#333">Беларусь</div>
<div style="position:absolute;left:0px;top:627px;width:1650px;height:32px;background:#f9f9f9"></div>
<div style="position:absolute;left:0px;top:659px;width:1650px;height:1px;background:#e3e3e3"></div>
<div style="position:absolute;left:35px;top:640.2px;width:14px;height:4.6px;box-sizing:border-box;border:1px solid #2e5b82;background:#8fb4da;box-shadow:0 0 0 1px #fff"></div>
<div class="t" style="left:64.5px;top:636.02px;font-size:15.33px;line-height:15.33px;color:#333;letter-spacing:0">Билет на поезд</div>
<div class="t" style="left:467px;top:636.02px;font-size:15.33px;line-height:15.33px;color:#333;letter-spacing:0.35px">00-00000662</div>
<div class="t" style="left:837px;top:636.02px;font-size:15.33px;line-height:15.33px;color:#333;letter-spacing:0.2px">20%</div>
<div style="position:absolute;left:0px;top:692px;width:1650px;height:1px;background:#e3e3e3"></div>
<div style="position:absolute;left:35px;top:673.2px;width:14px;height:4.6px;box-sizing:border-box;border:1px solid #2e5b82;background:#8fb4da;box-shadow:0 0 0 1px #fff"></div>
<div class="t" style="left:64.5px;top:669.02px;font-size:15.33px;line-height:15.33px;color:#333;letter-spacing:0">В</div>
<div class="t" style="left:467px;top:669.02px;font-size:15.33px;line-height:15.33px;color:#333;letter-spacing:0.35px">00-00000010</div>
<div class="t" style="left:837px;top:669.02px;font-size:15.33px;line-height:15.33px;color:#333;letter-spacing:0.2px">20%</div>
<div style="position:absolute;left:0px;top:693px;width:1650px;height:32px;background:#f9f9f9"></div>
<div style="position:absolute;left:0px;top:725px;width:1650px;height:1px;background:#e3e3e3"></div>
<div style="position:absolute;left:35px;top:706.2px;width:14px;height:4.6px;box-sizing:border-box;border:1px solid #2e5b82;background:#8fb4da;box-shadow:0 0 0 1px #fff"></div>
<div class="t" style="left:64.5px;top:702.02px;font-size:15.33px;line-height:15.33px;color:#333;letter-spacing:0">в мат А</div>
<div class="t" style="left:467px;top:702.02px;font-size:15.33px;line-height:15.33px;color:#333;letter-spacing:0.35px">00-00000401</div>
<div class="t" style="left:837px;top:702.02px;font-size:15.33px;line-height:15.33px;color:#333;letter-spacing:0.2px">20%</div>
<div style="position:absolute;left:0px;top:758px;width:1650px;height:1px;background:#e3e3e3"></div>
<div style="position:absolute;left:35px;top:739.2px;width:14px;height:4.6px;box-sizing:border-box;border:1px solid #2e5b82;background:#8fb4da;box-shadow:0 0 0 1px #fff"></div>
<div class="t" style="left:64.5px;top:735.02px;font-size:15.33px;line-height:15.33px;color:#333;letter-spacing:0">в мат Б</div>
<div class="t" style="left:467px;top:735.02px;font-size:15.33px;line-height:15.33px;color:#333;letter-spacing:0.35px">00-00000402</div>
<div class="t" style="left:837px;top:735.02px;font-size:15.33px;line-height:15.33px;color:#333;letter-spacing:0.2px">20%</div>
</div>
<svg style="position:absolute;left:255px;top:962px;" width="10" height="12" viewBox="0 0 10 12"><path d="M7,2.6 V9.4 L2.6,6 Z" fill="#c4c4c4"/></svg>
<div style="position:absolute;left:274px;top:963px;width:1454.6px;height:10px;background:#d5d5d5;border-radius:5px"></div>
<div style="position:absolute;left:274px;top:963px;width:1368px;height:10px;background:#9b9b9b;border-radius:5px"></div>
<svg style="position:absolute;left:1738.5px;top:962px;" width="10" height="12" viewBox="0 0 10 12"><path d="M3,3.2 V8.8 L7.6,6 Z" fill="#333"/></svg>
<div style="position:absolute;left:1776px;top:956px;width:120px;height:26px;box-sizing:border-box;border:1px solid #ababab;border-right:none;border-bottom:none;background:#fff"></div>
<div style="position:absolute;left:1806px;top:956px;width:1px;height:26px;background:#ababab"></div>
<div style="position:absolute;left:1836px;top:956px;width:1px;height:26px;background:#ababab"></div>
<div style="position:absolute;left:1866px;top:956px;width:1px;height:26px;background:#ababab"></div>
<svg style="position:absolute;left:0;top:0;overflow:visible" width="1" height="1"><path d="M1785.2,965.9 H1797.8" stroke="#b5b5b5" stroke-width="1.3"/><path d="M1785.0,972.9 L1791.5,966.6 L1798.0,972.9 Z" fill="#b5b5b5"/></svg>
<svg style="position:absolute;left:0;top:0;overflow:visible" width="1" height="1"><path d="M1815.0,972.9 L1821.5,966.5 L1828.0,972.9 Z" fill="#b5b5b5"/></svg>
<div style="position:absolute;left:1837px;top:957px;width:29px;height:25px;background:linear-gradient(#fff,#ececec)"></div>
<svg style="position:absolute;left:0;top:0;overflow:visible" width="1" height="1"><path d="M1845.0,966.9 L1851.5,973.3 L1858.0,966.9 Z" fill="#333"/></svg>
<div style="position:absolute;left:1867px;top:957px;width:29px;height:25px;background:linear-gradient(#fff,#ececec)"></div>
<svg style="position:absolute;left:0;top:0;overflow:visible" width="1" height="1"><path d="M1875.0,966.9 L1881.5,972.8 L1888.0,966.9 Z" fill="#333"/><path d="M1875.2,973.9 H1887.8" stroke="#333" stroke-width="1.3"/></svg>
<div class="t" style="left:246.00px;top:996.72px;font-size:15.33px;line-height:15.33px;color:#0a9a48;font-weight:normal;text-decoration:underline;text-underline-offset:2px">Цены номенклатуры</div>
<div style="position:absolute;left:492px;top:397px;width:1208px;height:417px;box-sizing:border-box;border:1px solid #9f9f9f;background:#fff;box-shadow:0 2px 8px rgba(0,0,0,0.2)"></div>
<svg style="position:absolute;left:1549.5px;top:412.2px;" width="20" height="20" viewBox="0 0 20 20"><path d="M4.3,8.8 L2.3,10.8 A4.5,4.5 0 0 0 8.7,17.2 L10.6,15.3 M8.3,4.8 L10.8,2.3 A4.5,4.5 0 0 1 17.2,8.7 L14.9,11 M6.7,12.5 L12.2,7" fill="none" stroke="#3c3c3c" stroke-width="1.45"/></svg>
<svg style="position:absolute;left:1589.9px;top:416.3px;" width="16" height="16" viewBox="0 0 16 16"><g fill="#7a7a7a"><circle cx="8" cy="1.9" r="1.8"/><circle cx="8" cy="6.85" r="1.8"/><circle cx="8" cy="11.8" r="1.8"/></g></svg>
<svg style="position:absolute;left:1630.3px;top:417.6px;" width="14" height="14" viewBox="0 0 14 14"><rect x="1.35" y="1.35" width="9.7" height="9.7" fill="none" stroke="#222" stroke-width="1.3"/></svg>
<svg style="position:absolute;left:1667px;top:418px;" width="16" height="16" viewBox="0 0 16 16"><path d="M1,1 L13.2,13.2 M13.2,1 L1,13.2" stroke="#222" stroke-width="1.4"/></svg>
<div style="position:absolute;left:1552px;top:540.3px;width:71.59999999999991px;height:32.30000000000007px;box-sizing:border-box;border:1px solid #b9b9b9;border-bottom-color:#9c9c9c;border-radius:3px;background:linear-gradient(#ffffff 0%,#ffffff 42%,#efefef 100%);box-shadow:0 1px 0 rgba(0,0,0,0.12);"></div>
<div class="t" style="left:1568.50px;top:549.52px;font-size:15.33px;line-height:15.33px;color:#4d4d4d;font-weight:normal;">Еще</div>
<svg style="position:absolute;left:1605px;top:552px;" width="12" height="10" viewBox="0 0 12 10"><path d="M2,3 H9 L5.5,6.6 Z" fill="#555"/></svg>
<div style="position:absolute;left:1635.4px;top:540.3px;width:37.09999999999991px;height:32.30000000000007px;box-sizing:border-box;border:1px solid #b9b9b9;border-bottom-color:#9c9c9c;border-radius:3px;background:linear-gradient(#ffffff 0%,#ffffff 42%,#efefef 100%);box-shadow:0 1px 0 rgba(0,0,0,0.12);"></div>
<div class="t" style="left:1649.20px;top:548.61px;font-size:17px;line-height:17px;color:#222;font-weight:normal;">?</div>
<div style="position:absolute;left:508px;top:585px;width:1165px;height:214px;box-sizing:border-box;border:1px solid #a3a3a3;background:#fff"></div>
<div style="position:absolute;left:509px;top:586px;width:1163px;height:34px;background:#f0f0f0"></div>
<div class="t" style="left:509px;top:586px;width:1152px;height:34px;overflow:hidden"><div class="t" style="right:0;top:9.02px;font-size:15.33px;line-height:15.33px;color:#4d4d4d">Счет учета НДС по приобретенн…</div></div>
<div style="position:absolute;left:509px;top:621px;width:1163px;height:1px;background:repeating-linear-gradient(90deg,#222 0 1px,transparent 1px 2px)"></div>
<div style="position:absolute;left:509px;top:655px;width:1163px;height:1px;background:repeating-linear-gradient(90deg,#222 0 1px,transparent 1px 2px)"></div>
<svg style="position:absolute;left:517.5px;top:778px;" width="10" height="12" viewBox="0 0 10 12"><path d="M7,2.6 V9.4 L2.6,6 Z" fill="#c4c4c4"/></svg>
<div style="position:absolute;left:536px;top:779px;width:968.5999999999999px;height:10px;background:#d5d5d5;border-radius:5px"></div>
<div style="position:absolute;left:536px;top:779px;width:499px;height:10px;background:#9b9b9b;border-radius:5px"></div>
<svg style="position:absolute;left:1514px;top:778px;" width="10" height="12" viewBox="0 0 10 12"><path d="M3,3.2 V8.8 L7.6,6 Z" fill="#333"/></svg>
<div style="position:absolute;left:1552px;top:772px;width:120px;height:26px;box-sizing:border-box;border:1px solid #ababab;border-right:none;border-bottom:none;background:#fff"></div>
<div style="position:absolute;left:1582px;top:772px;width:1px;height:26px;background:#ababab"></div>
<div style="position:absolute;left:1612px;top:772px;width:1px;height:26px;background:#ababab"></div>
<div style="position:absolute;left:1642px;top:772px;width:1px;height:26px;background:#ababab"></div>
<svg style="position:absolute;left:0;top:0;overflow:visible" width="1" height="1"><path d="M1561.2,781.9 H1573.8" stroke="#b5b5b5" stroke-width="1.3"/><path d="M1561.0,788.9 L1567.5,782.6 L1574.0,788.9 Z" fill="#b5b5b5"/></svg>
<svg style="position:absolute;left:0;top:0;overflow:visible" width="1" height="1"><path d="M1591.0,788.9 L1597.5,782.5 L1604.0,788.9 Z" fill="#b5b5b5"/></svg>
<svg style="position:absolute;left:0;top:0;overflow:visible" width="1" height="1"><path d="M1621.0,782.9 L1627.5,789.3 L1634.0,782.9 Z" fill="#b5b5b5"/></svg>
<svg style="position:absolute;left:0;top:0;overflow:visible" width="1" height="1"><path d="M1651.0,782.9 L1657.5,788.8 L1664.0,782.9 Z" fill="#b5b5b5"/><path d="M1651.2,789.9 H1663.8" stroke="#b5b5b5" stroke-width="1.3"/></svg>
<div style="position:absolute;left:433px;top:280px;width:1055px;height:470px;box-sizing:border-box;border:1px solid #9f9f9f;background:#fff;box-shadow:0 2px 8px rgba(0,0,0,0.2)"></div>
<svg style="position:absolute;left:448px;top:292px;" width="30" height="28" viewBox="0 0 30 28"><path d="M15.25,3.80 L18.13,10.84 L25.71,11.40 L19.91,16.31 L21.72,23.70 L15.25,19.70 L8.78,23.70 L10.59,16.31 L4.79,11.40 L12.37,10.84 Z" fill="none" stroke="#a9a9a9" stroke-width="1"/></svg>
<div class="t" style="left:488.10px;top:293.69px;font-size:23.76px;line-height:23.76px;color:#000;font-weight:normal;">Счета учета номенклатуры (создание) *</div>
<svg style="position:absolute;left:1337.8px;top:295.6px;" width="20" height="20" viewBox="0 0 20 20"><path d="M4.3,8.8 L2.3,10.8 A4.5,4.5 0 0 0 8.7,17.2 L10.6,15.3 M8.3,4.8 L10.8,2.3 A4.5,4.5 0 0 1 17.2,8.7 L14.9,11 M6.7,12.5 L12.2,7" fill="none" stroke="#3c3c3c" stroke-width="1.45"/></svg>
<svg style="position:absolute;left:1378px;top:299.2px;" width="16" height="16" viewBox="0 0 16 16"><g fill="#7a7a7a"><circle cx="8" cy="1.9" r="1.8"/><circle cx="8" cy="6.85" r="1.8"/><circle cx="8" cy="11.8" r="1.8"/></g></svg>
<svg style="position:absolute;left:1418.4px;top:300.4px;" width="14" height="14" viewBox="0 0 14 14"><rect x="1.35" y="1.35" width="9.7" height="9.7" fill="none" stroke="#222" stroke-width="1.3"/></svg>
<svg style="position:absolute;left:1455.2px;top:298.4px;" width="16" height="16" viewBox="0 0 16 16"><path d="M1,1 L13.2,13.2 M13.2,1 L1,13.2" stroke="#222" stroke-width="1.4"/></svg>
<div style="position:absolute;left:449.5px;top:334.4px;width:193.5px;height:32.30000000000001px;box-sizing:border-box;border:1px solid #bda600;border-bottom-color:#a89200;border-radius:3px;background:linear-gradient(#ffea45,#ffe000 50%,#f1d000);box-shadow:0 1px 0 rgba(0,0,0,0.15)"></div>
<div class="t" style="left:466.40px;top:343.02px;font-size:15.33px;line-height:15.33px;color:#2e3240;font-weight:bold;letter-spacing:0.38px">Записать и закрыть</div>
<div style="position:absolute;left:654px;top:334.4px;width:102px;height:32.30000000000001px;box-sizing:border-box;border:1px solid #b9b9b9;border-bottom-color:#9c9c9c;border-radius:3px;background:linear-gradient(#ffffff 0%,#ffffff 42%,#efefef 100%);box-shadow:0 1px 0 rgba(0,0,0,0.12);"></div>
<div class="t" style="left:671.90px;top:343.02px;font-size:15.33px;line-height:15.33px;color:#4d4d4d;font-weight:normal;">Записать</div>
<div style="position:absolute;left:1341.4px;top:334.4px;width:71.29999999999995px;height:32.30000000000001px;box-sizing:border-box;border:1px solid #b9b9b9;border-bottom-color:#9c9c9c;border-radius:3px;background:linear-gradient(#ffffff 0%,#ffffff 42%,#efefef 100%);box-shadow:0 1px 0 rgba(0,0,0,0.12);"></div>
<div class="t" style="left:1358.70px;top:342.72px;font-size:15.33px;line-height:15.33px;color:#4d4d4d;font-weight:normal;">Еще</div>
<svg style="position:absolute;left:1395px;top:346px;" width="12" height="10" viewBox="0 0 12 10"><path d="M2,3 H9 L5.5,6.6 Z" fill="#555"/></svg>
<div style="position:absolute;left:1424.3px;top:334.4px;width:37.299999999999955px;height:32.30000000000001px;box-sizing:border-box;border:1px solid #b9b9b9;border-bottom-color:#9c9c9c;border-radius:3px;background:linear-gradient(#ffffff 0%,#ffffff 42%,#efefef 100%);box-shadow:0 1px 0 rgba(0,0,0,0.12);"></div>
<div class="t" style="left:1438.30px;top:342.61px;font-size:17px;line-height:17px;color:#222;font-weight:normal;">?</div>
<div style="position:absolute;left:955px;top:378px;width:1px;height:356px;background:repeating-linear-gradient(180deg,#cdcdcd 0 4px,transparent 4px 6px)"></div>
<div class="t" style="left:449.60px;top:386.02px;font-size:15.33px;line-height:15.33px;color:#4d4d4d;font-weight:normal;">Организация:</div>
<div style="position:absolute;left:563px;top:379px;width:386px;height:28px;box-sizing:border-box;border:1px solid #a5a5a5;border-radius:3px;background:#fff"></div>
<div style="position:absolute;left:870px;top:379px;width:1px;height:28px;background:#a5a5a5"></div>
<svg style="position:absolute;left:0;top:0;overflow:visible" width="1" height="1"><path d="M880.35,391.20 H886.55 L883.45,394.80 Z" fill="#3a3a3a"/></svg>
<div style="position:absolute;left:896px;top:379px;width:1px;height:28px;background:#a5a5a5"></div>
<svg style="position:absolute;left:0;top:0;overflow:visible" width="1" height="1"><path d="M905.55,389.10 L913.35,396.90 M913.35,389.10 L905.55,396.90" stroke="#3a3a3a" stroke-width="1.2"/></svg>
<div style="position:absolute;left:922px;top:379px;width:1px;height:28px;background:#a5a5a5"></div>
<svg style="position:absolute;left:0;top:0;overflow:visible" width="1" height="1"><rect x="933.45" y="387.80" width="6.5" height="6.6" fill="none" stroke="#3a3a3a" stroke-width="1.2"/><path d="M931.85,391.70 H928.95 V398.40 H936.45 V396.30" fill="none" stroke="#3a3a3a" stroke-width="1.2"/></svg>
<div class="t" style="left:567.30px;top:385.72px;font-size:15.33px;line-height:15.33px;color:#333;font-weight:normal;">Фирма УСН ООО</div>
<div class="t" style="left:449.60px;top:425.02px;font-size:15.33px;line-height:15.33px;color:#4d4d4d;font-weight:normal;">Номенклатура:</div>
<div style="position:absolute;left:563px;top:418px;width:386px;height:28px;box-sizing:border-box;border:1px solid #a5a5a5;border-radius:3px;background:#fff"></div>
<div style="position:absolute;left:870px;top:418px;width:1px;height:28px;background:#a5a5a5"></div>
<svg style="position:absolute;left:0;top:0;overflow:visible" width="1" height="1"><path d="M880.35,430.20 H886.55 L883.45,433.80 Z" fill="#3a3a3a"/></svg>
<div style="position:absolute;left:896px;top:418px;width:1px;height:28px;background:#a5a5a5"></div>
<svg style="position:absolute;left:0;top:0;overflow:visible" width="1" height="1"><path d="M905.55,428.10 L913.35,435.90 M913.35,428.10 L905.55,435.90" stroke="#3a3a3a" stroke-width="1.2"/></svg>
<div style="position:absolute;left:922px;top:418px;width:1px;height:28px;background:#a5a5a5"></div>
<svg style="position:absolute;left:0;top:0;overflow:visible" width="1" height="1"><rect x="933.45" y="426.80" width="6.5" height="6.6" fill="none" stroke="#3a3a3a" stroke-width="1.2"/><path d="M931.85,430.70 H928.95 V437.40 H936.45 V435.30" fill="none" stroke="#3a3a3a" stroke-width="1.2"/></svg>
<div class="t" style="left:567.30px;top:424.72px;font-size:15.33px;line-height:15.33px;color:#333;font-weight:normal;">Готовые блюда</div>
<div class="t" style="left:449.70px;top:458.71px;font-size:19.6px;line-height:19.6px;color:#0c9647;font-weight:normal;">Счета учета номенклатуры</div>
<div class="t" style="left:449.70px;top:491.02px;font-size:15.33px;line-height:15.33px;color:#4d4d4d;font-weight:normal;">Счет учета:</div>
<div style="position:absolute;left:610px;top:485px;width:166px;height:27px;box-sizing:border-box;border:1px solid #a5a5a5;border-radius:3px;background:#fff"></div>
<div style="position:absolute;left:723px;top:485px;width:1px;height:27px;background:#a5a5a5"></div>
<svg style="position:absolute;left:0;top:0;overflow:visible" width="1" height="1"><path d="M733.30,496.70 H739.50 L736.40,500.30 Z" fill="#3a3a3a"/></svg>
<div style="position:absolute;left:749px;top:485px;width:1px;height:27px;background:#a5a5a5"></div>
<svg style="position:absolute;left:0;top:0;overflow:visible" width="1" height="1"><rect x="760.45" y="493.30" width="6.5" height="6.6" fill="none" stroke="#3a3a3a" stroke-width="1.2"/><path d="M758.85,497.20 H755.95 V503.90 H763.45 V501.80" fill="none" stroke="#3a3a3a" stroke-width="1.2"/></svg>
<div class="t" style="left:614.70px;top:491.22px;font-size:15.33px;line-height:15.33px;color:#333;font-weight:normal;letter-spacing:0.3px">43</div>
<div class="t" style="left:449.70px;top:530.02px;font-size:15.33px;line-height:15.33px;color:#4d4d4d;font-weight:normal;">Счет учета передачи:</div>
<div style="position:absolute;left:610px;top:523px;width:166px;height:28px;box-sizing:border-box;border:1px solid #a5a5a5;border-radius:3px;background:#fff"></div>
<div style="position:absolute;left:723px;top:523px;width:1px;height:28px;background:#a5a5a5"></div>
<svg style="position:absolute;left:0;top:0;overflow:visible" width="1" height="1"><path d="M733.30,535.20 H739.50 L736.40,538.80 Z" fill="#3a3a3a"/></svg>
<div style="position:absolute;left:749px;top:523px;width:1px;height:28px;background:#a5a5a5"></div>
<svg style="position:absolute;left:0;top:0;overflow:visible" width="1" height="1"><rect x="760.45" y="531.80" width="6.5" height="6.6" fill="none" stroke="#3a3a3a" stroke-width="1.2"/><path d="M758.85,535.70 H755.95 V542.40 H763.45 V540.30" fill="none" stroke="#3a3a3a" stroke-width="1.2"/></svg>
<div class="t" style="left:449.70px;top:642.41px;font-size:19.6px;line-height:19.6px;color:#0c9647;font-weight:normal;">Счета учета доходов и расходов</div>
<div class="t" style="left:449.70px;top:673.32px;font-size:15.33px;line-height:15.33px;color:#4d4d4d;font-weight:normal;">Доходы от реализации:</div>
<div style="position:absolute;left:631px;top:668px;width:166px;height:27px;box-sizing:border-box;border:1px solid #a5a5a5;border-radius:3px;background:#fff"></div>
<div style="position:absolute;left:744px;top:668px;width:1px;height:27px;background:#a5a5a5"></div>
<svg style="position:absolute;left:0;top:0;overflow:visible" width="1" height="1"><path d="M754.30,679.70 H760.50 L757.40,683.30 Z" fill="#3a3a3a"/></svg>
<div style="position:absolute;left:770px;top:668px;width:1px;height:27px;background:#a5a5a5"></div>
<svg style="position:absolute;left:0;top:0;overflow:visible" width="1" height="1"><rect x="781.45" y="676.30" width="6.5" height="6.6" fill="none" stroke="#3a3a3a" stroke-width="1.2"/><path d="M779.85,680.20 H776.95 V686.90 H784.45 V684.80" fill="none" stroke="#3a3a3a" stroke-width="1.2"/></svg>
<div class="t" style="left:635.30px;top:674.22px;font-size:15.33px;line-height:15.33px;color:#333;font-weight:normal;letter-spacing:0.3px">90.1.1</div>
<div class="t" style="left:449.70px;top:712.62px;font-size:15.33px;line-height:15.33px;color:#4d4d4d;font-weight:normal;">Расходы от реализации:</div>
<div style="position:absolute;left:628px;top:704px;width:171px;height:32px;box-sizing:border-box;border:2px solid #f7c200;border-radius:2px;background:#fff"></div>
<div style="position:absolute;left:744px;top:708px;width:1px;height:25px;background:#a5a5a5"></div>
<svg style="position:absolute;left:0;top:0;overflow:visible" width="1" height="1"><path d="M754.30,718.20 H760.50 L757.40,721.80 Z" fill="#3a3a3a"/></svg>
<div style="position:absolute;left:770px;top:708px;width:1px;height:25px;background:#a5a5a5"></div>
<svg style="position:absolute;left:0;top:0;overflow:visible" width="1" height="1"><rect x="782.45" y="714.80" width="6.5" height="6.6" fill="none" stroke="#3a3a3a" stroke-width="1.2"/><path d="M780.85,718.70 H777.95 V725.40 H785.45 V723.30" fill="none" stroke="#3a3a3a" stroke-width="1.2"/></svg>
<div class="t" style="left:635.30px;top:712.72px;font-size:15.33px;line-height:15.33px;color:#333;font-weight:normal;letter-spacing:0.3px">90.4.1</div>
<div style="position:absolute;left:679px;top:708px;width:1.2999999999999545px;height:24px;background:#111"></div>
<div class="t" style="left:962.80px;top:386.02px;font-size:15.33px;line-height:15.33px;color:#4d4d4d;font-weight:normal;">Склад:</div>
<div style="position:absolute;left:1050px;top:379px;width:412px;height:28px;box-sizing:border-box;border:1px solid #a5a5a5;border-radius:3px;background:#fff"></div>
<div style="position:absolute;left:1383px;top:379px;width:1px;height:28px;background:#a5a5a5"></div>
<svg style="position:absolute;left:0;top:0;overflow:visible" width="1" height="1"><path d="M1393.35,391.20 H1399.55 L1396.45,394.80 Z" fill="#3a3a3a"/></svg>
<div style="position:absolute;left:1409px;top:379px;width:1px;height:28px;background:#a5a5a5"></div>
<svg style="position:absolute;left:0;top:0;overflow:visible" width="1" height="1"><path d="M1418.60,389.10 L1426.40,396.90 M1426.40,389.10 L1418.60,396.90" stroke="#3a3a3a" stroke-width="1.2"/></svg>
<div style="position:absolute;left:1435px;top:379px;width:1px;height:28px;background:#a5a5a5"></div>
<svg style="position:absolute;left:0;top:0;overflow:visible" width="1" height="1"><rect x="1446.45" y="387.80" width="6.5" height="6.6" fill="none" stroke="#3a3a3a" stroke-width="1.2"/><path d="M1444.85,391.70 H1441.95 V398.40 H1449.45 V396.30" fill="none" stroke="#3a3a3a" stroke-width="1.2"/></svg>
<div class="t" style="left:962.80px;top:425.02px;font-size:15.33px;line-height:15.33px;color:#4d4d4d;font-weight:normal;">Тип склада:</div>
<div style="position:absolute;left:1050px;top:418px;width:412px;height:28px;box-sizing:border-box;border:1px solid #a5a5a5;border-radius:3px;background:#fff"></div>
<div style="position:absolute;left:1409px;top:418px;width:1px;height:28px;background:#a5a5a5"></div>
<svg style="position:absolute;left:0;top:0;overflow:visible" width="1" height="1"><path d="M1419.40,430.20 H1425.60 L1422.50,433.80 Z" fill="#3a3a3a"/></svg>
<div style="position:absolute;left:1435px;top:418px;width:1px;height:28px;background:#a5a5a5"></div>
<svg style="position:absolute;left:0;top:0;overflow:visible" width="1" height="1"><path d="M1444.35,428.10 L1452.15,435.90 M1452.15,428.10 L1444.35,435.90" stroke="#3a3a3a" stroke-width="1.2"/></svg>
<div class="t" style="left:962.80px;top:458.71px;font-size:19.6px;line-height:19.6px;color:#0c9647;font-weight:normal;">Счета учета НДС</div>
<div class="t" style="left:962.80px;top:491.02px;font-size:15.33px;line-height:15.33px;color:#4d4d4d;font-weight:normal;">НДС по приобретенным ценностям:</div>
<div style="position:absolute;left:1228px;top:484px;width:166px;height:28px;box-sizing:border-box;border:1px solid #a5a5a5;border-radius:3px;background:#fff"></div>
<div style="position:absolute;left:1341px;top:484px;width:1px;height:28px;background:#a5a5a5"></div>
<svg style="position:absolute;left:0;top:0;overflow:visible" width="1" height="1"><path d="M1351.40,496.20 H1357.60 L1354.50,499.80 Z" fill="#3a3a3a"/></svg>
<div style="position:absolute;left:1367px;top:484px;width:1px;height:28px;background:#a5a5a5"></div>
<svg style="position:absolute;left:0;top:0;overflow:visible" width="1" height="1"><rect x="1378.45" y="492.80" width="6.5" height="6.6" fill="none" stroke="#3a3a3a" stroke-width="1.2"/><path d="M1376.85,496.70 H1373.95 V503.40 H1381.45 V501.30" fill="none" stroke="#3a3a3a" stroke-width="1.2"/></svg>
<div class="t" style="left:962.80px;top:530.02px;font-size:15.33px;line-height:15.33px;color:#4d4d4d;font-weight:normal;">НДС по реализации:</div>
<div style="position:absolute;left:1228px;top:524px;width:166px;height:27px;box-sizing:border-box;border:1px solid #a5a5a5;border-radius:3px;background:#fff"></div>
<div style="position:absolute;left:1341px;top:524px;width:1px;height:27px;background:#a5a5a5"></div>
<svg style="position:absolute;left:0;top:0;overflow:visible" width="1" height="1"><path d="M1351.40,535.70 H1357.60 L1354.50,539.30 Z" fill="#3a3a3a"/></svg>
<div style="position:absolute;left:1367px;top:524px;width:1px;height:27px;background:#a5a5a5"></div>
<svg style="position:absolute;left:0;top:0;overflow:visible" width="1" height="1"><rect x="1378.45" y="532.30" width="6.5" height="6.6" fill="none" stroke="#3a3a3a" stroke-width="1.2"/><path d="M1376.85,536.20 H1373.95 V542.90 H1381.45 V540.80" fill="none" stroke="#3a3a3a" stroke-width="1.2"/></svg>
<div class="t" style="left:1231.90px;top:530.22px;font-size:15.33px;line-height:15.33px;color:#333;font-weight:normal;letter-spacing:0.3px">90.2</div>
<div class="t" style="left:962.80px;top:569.02px;font-size:15.33px;line-height:15.33px;color:#4d4d4d;font-weight:normal;">НДС, уплаченный на таможне:</div>
<div style="position:absolute;left:1228px;top:562px;width:166px;height:28px;box-sizing:border-box;border:1px solid #a5a5a5;border-radius:3px;background:#fff"></div>
<div style="position:absolute;left:1341px;top:562px;width:1px;height:28px;background:#a5a5a5"></div>
<svg style="position:absolute;left:0;top:0;overflow:visible" width="1" height="1"><path d="M1351.40,574.20 H1357.60 L1354.50,577.80 Z" fill="#3a3a3a"/></svg>
<div style="position:absolute;left:1367px;top:562px;width:1px;height:28px;background:#a5a5a5"></div>
<svg style="position:absolute;left:0;top:0;overflow:visible" width="1" height="1"><rect x="1378.45" y="570.80" width="6.5" height="6.6" fill="none" stroke="#3a3a3a" stroke-width="1.2"/><path d="M1376.85,574.70 H1373.95 V581.40 H1381.45 V579.30" fill="none" stroke="#3a3a3a" stroke-width="1.2"/></svg>
<div class="t" style="left:962.80px;top:603.41px;font-size:19.6px;line-height:19.6px;color:#0c9647;font-weight:normal;">Счета учета материалов, принятых в переработку</div>
<div class="t" style="left:962.80px;top:635.42px;font-size:15.33px;line-height:15.33px;color:#4d4d4d;font-weight:normal;">Материалы заказчика на складе:</div>
<div style="position:absolute;left:1248px;top:629px;width:166px;height:27px;box-sizing:border-box;border:1px solid #a5a5a5;border-radius:3px;background:#fff"></div>
<div style="position:absolute;left:1361px;top:629px;width:1px;height:27px;background:#a5a5a5"></div>
<svg style="position:absolute;left:0;top:0;overflow:visible" width="1" height="1"><path d="M1371.40,640.70 H1377.60 L1374.50,644.30 Z" fill="#3a3a3a"/></svg>
<div style="position:absolute;left:1387px;top:629px;width:1px;height:27px;background:#a5a5a5"></div>
<svg style="position:absolute;left:0;top:0;overflow:visible" width="1" height="1"><rect x="1398.45" y="637.30" width="6.5" height="6.6" fill="none" stroke="#3a3a3a" stroke-width="1.2"/><path d="M1396.85,641.20 H1393.95 V647.90 H1401.45 V645.80" fill="none" stroke="#3a3a3a" stroke-width="1.2"/></svg>
<div class="t" style="left:962.80px;top:674.02px;font-size:15.33px;line-height:15.33px;color:#4d4d4d;font-weight:normal;">Материалы заказчика в производстве:</div>
<div style="position:absolute;left:1248px;top:667px;width:166px;height:28px;box-sizing:border-box;border:1px solid #a5a5a5;border-radius:3px;background:#fff"></div>
<div style="position:absolute;left:1361px;top:667px;width:1px;height:28px;background:#a5a5a5"></div>
<svg style="position:absolute;left:0;top:0;overflow:visible" width="1" height="1"><path d="M1371.40,679.20 H1377.60 L1374.50,682.80 Z" fill="#3a3a3a"/></svg>
<div style="position:absolute;left:1387px;top:667px;width:1px;height:28px;background:#a5a5a5"></div>
<svg style="position:absolute;left:0;top:0;overflow:visible" width="1" height="1"><rect x="1398.45" y="675.80" width="6.5" height="6.6" fill="none" stroke="#3a3a3a" stroke-width="1.2"/><path d="M1396.85,679.70 H1393.95 V686.40 H1401.45 V684.30" fill="none" stroke="#3a3a3a" stroke-width="1.2"/></svg>
<div style="position:absolute;left:442px;top:482px;width:337px;height:33px;box-sizing:border-box;border:3px solid #e2372b;border-radius:6px;"></div>
<div style="position:absolute;left:440px;top:665px;width:362px;height:73px;box-sizing:border-box;border:3px solid #e2372b;border-radius:6px;"></div>
<div style="position:absolute;left:958px;top:521px;width:437px;height:32px;box-sizing:border-box;border:3px solid #e2372b;border-radius:6px;"></div></body></html>
